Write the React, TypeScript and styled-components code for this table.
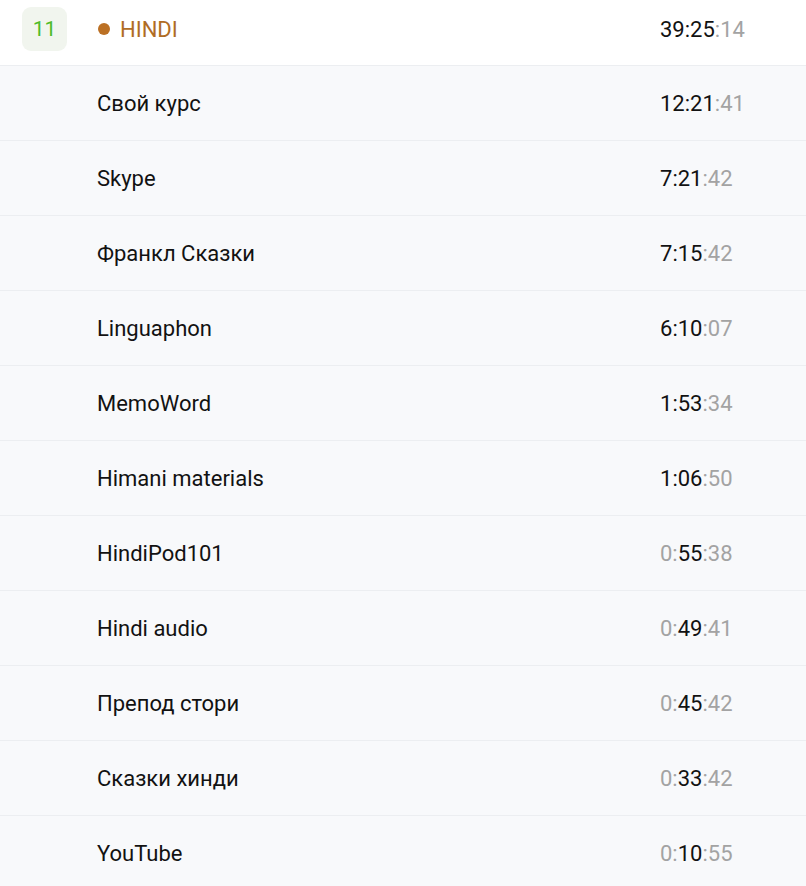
import React from 'react'
import styled, { createGlobalStyle } from 'styled-components'

const GlobalStyle = createGlobalStyle`
  html, body {
    margin: 0;
    padding: 0;
    background: #f8f9fb;
  }
  body {
    font-family: Roboto, "Noto Sans", Arial, sans-serif;
    -webkit-font-smoothing: antialiased;
  }
`

const List = styled.div`
  width: 806px;
  display: flex;
  flex-direction: column;
`

const Header = styled.div`
  height: 66px;
  box-sizing: border-box;
  padding: 7px 0 0 22px;
  background: #ffffff;
  border-bottom: 1px solid #eceef1;
  display: flex;
  align-items: flex-start;
`

const Badge = styled.div`
  width: 45px;
  height: 44px;
  border-radius: 9px;
  background: #f1f5ee;
  color: #4dbb28;
  font-size: 21px;
  display: flex;
  align-items: center;
  justify-content: center;
`

const Title = styled.div`
  flex: 1;
  height: 44px;
  margin-left: 31px;
  display: flex;
  align-items: center;
  color: #b06c25;
  font-size: 22px;
`

const Dot = styled.span`
  width: 12px;
  height: 12px;
  border-radius: 50%;
  background: #bb7024;
  margin-right: 10px;
`

const Row = styled.div`
  height: 75px;
  box-sizing: border-box;
  border-bottom: 1px solid #eceef1;
  background: #f8f9fb;
  display: flex;
  align-items: center;
  padding-left: 97px;
`

const Name = styled.div`
  flex: 1;
  color: #121212;
  font-size: 22px;
`

const Time = styled.div<{ $top?: boolean }>`
  width: 146px;
  height: ${({ $top }) => ($top ? '44px' : 'auto')};
  display: flex;
  align-items: center;
  font-size: 22px;
  color: #121212;
`

const Dim = styled.span`
  color: #a3a3a3;
`

const pad = (n: number) => String(n).padStart(2, '0')

const Duration = ({ h, m, s }: { h: number; m: number; s: number }) =>
  h > 0 ? (
    <>
      {h}:{pad(m)}
      <Dim>:{pad(s)}</Dim>
    </>
  ) : (
    <>
      <Dim>0:</Dim>
      {pad(m)}
      <Dim>:{pad(s)}</Dim>
    </>
  )

const items = [
  { name: 'Свой курс', h: 12, m: 21, s: 41 },
  { name: 'Skype', h: 7, m: 21, s: 42 },
  { name: 'Франкл Сказки', h: 7, m: 15, s: 42 },
  { name: 'Linguaphon', h: 6, m: 10, s: 7 },
  { name: 'MemoWord', h: 1, m: 53, s: 34 },
  { name: 'Himani materials', h: 1, m: 6, s: 50 },
  { name: 'HindiPod101', h: 0, m: 55, s: 38 },
  { name: 'Hindi audio', h: 0, m: 49, s: 41 },
  { name: 'Препод стори', h: 0, m: 45, s: 42 },
  { name: 'Сказки хинди', h: 0, m: 33, s: 42 },
  { name: 'YouTube', h: 0, m: 10, s: 55 },
]

const App = () => (
  <>
    <GlobalStyle />
    <List>
      <Header>
        <Badge>11</Badge>
        <Title>
          <Dot />
          HINDI
        </Title>
        <Time $top>
          <Duration h={39} m={25} s={14} />
        </Time>
      </Header>
      {items.map((item) => (
        <Row key={item.name}>
          <Name>{item.name}</Name>
          <Time>
            <Duration h={item.h} m={item.m} s={item.s} />
          </Time>
        </Row>
      ))}
    </List>
  </>
)

export default App
